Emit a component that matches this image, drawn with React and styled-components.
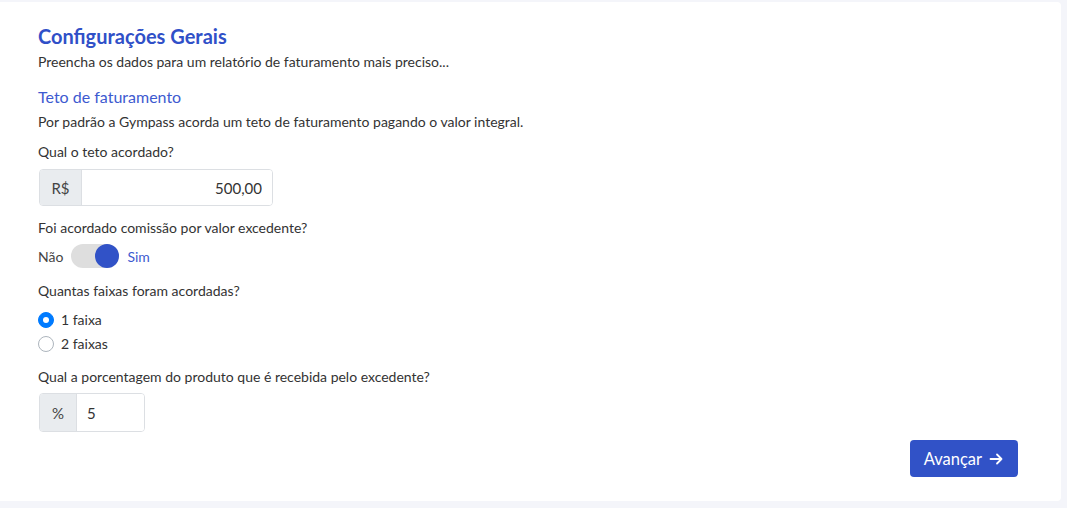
import React, { useState } from 'react';
import styled, { createGlobalStyle } from 'styled-components';

const GlobalStyle = createGlobalStyle`
  html, body {
    margin: 0;
    padding: 0;
    background: #f4f5fa;
  }
  body {
    font-family: "Lato", "Noto Sans", sans-serif;
    color: #333;
  }
  * { box-sizing: border-box; }
`;

const Page = styled.div`
  padding: 2px 6px 7px 0;
  height: 508px;
`;

const Card = styled.div`
  background: #fff;
  border-radius: 0 4px 4px 0;
  height: 499px;
  padding: 21px 43px 24px 38px;
  display: flex;
  flex-direction: column;
  & > * { flex-shrink: 0; }
`;

const Title = styled.h1`
  margin: 0;
  font-size: 20px;
  font-weight: 700;
  color: #3050c8;
  line-height: 26px;
`;

const Subtitle = styled.p`
  margin: 3px 0 0;
  font-size: 14px;
  line-height: 20px;
  color: #333;
`;

const SectionTitle = styled.h2`
  margin: 14px 0 0;
  font-size: 16px;
  font-weight: 400;
  color: #3d5ad0;
  line-height: 22px;
`;

const Text = styled.p`
  margin: ${p => p.$top || 4}px 0 0;
  font-size: 14px;
  line-height: 20px;
  color: #333;
`;

const InputGroup = styled.div`
  display: flex;
  width: ${p => p.$width}px;
  height: ${p => p.$height}px;
  margin-top: ${p => p.$top}px;
  margin-left: 1px;
  border: 1px solid #dcdfe3;
  border-radius: 4px;
  overflow: hidden;
`;

const Prefix = styled.div`
  width: ${p => p.$width}px;
  background: #e9ecef;
  border-right: 1px solid #dcdfe3;
  display: flex;
  align-items: center;
  justify-content: center;
  font-size: 15px;
  color: #444;
`;

const Field = styled.input`
  flex: 1;
  min-width: 0;
  border: none;
  outline: none;
  padding: 0 10px;
  font-family: inherit;
  font-size: 15px;
  color: #333;
  text-align: ${p => p.$align || 'left'};
  background: #fff;
`;

const SwitchRow = styled.div`
  display: flex;
  align-items: center;
  gap: 8px;
  margin-top: 6px;
  font-size: 14px;
`;

const SwitchLabel = styled.span`
  color: ${p => (p.$active ? '#3d5ad0' : '#444')};
`;

const Track = styled.button`
  width: 48px;
  height: 24px;
  border: none;
  border-radius: 12px;
  background: #dedede;
  padding: 0;
  position: relative;
  cursor: pointer;
`;

const Knob = styled.span`
  position: absolute;
  top: 0;
  left: ${p => (p.$on ? 24 : 0)}px;
  width: 24px;
  height: 24px;
  border-radius: 50%;
  background: #3152c7;
`;

const RadioList = styled.div`
  display: flex;
  flex-direction: column;
  gap: 4px;
  margin-top: 9px;
`;

const RadioItem = styled.label`
  display: flex;
  align-items: center;
  gap: 7px;
  font-size: 14px;
  line-height: 20px;
  color: #333;
  cursor: pointer;
`;

const RadioDot = styled.span`
  width: 16px;
  height: 16px;
  border-radius: 50%;
  border: 1px solid ${p => (p.$checked ? '#007bff' : '#adb5bd')};
  background: ${p => (p.$checked ? '#007bff' : '#fff')};
  display: flex;
  align-items: center;
  justify-content: center;
  &::after {
    content: '';
    width: 6px;
    height: 6px;
    border-radius: 50%;
    background: ${p => (p.$checked ? '#fff' : 'transparent')};
  }
`;

const Footer = styled.div`
  display: flex;
  justify-content: flex-end;
  margin-top: 8px;
`;

const Button = styled.button`
  display: flex;
  align-items: center;
  gap: 6px;
  height: 37px;
  padding: 0 14px;
  border: none;
  border-radius: 4px;
  background: #3152c7;
  color: #fff;
  font-family: inherit;
  font-size: 16.5px;
  cursor: pointer;
`;

function Arrow() {
  return (
    <svg width="16" height="16" viewBox="0 0 16 16" fill="none" stroke="#fff" strokeWidth="1.8" strokeLinecap="round" strokeLinejoin="round">
      <path d="M2.5 8h11M9 3.5L13.5 8 9 12.5" />
    </svg>
  );
}

export default function App() {
  const [on, setOn] = useState(true);
  const [faixa, setFaixa] = useState(1);

  return (
    <Page>
      <GlobalStyle />
      <Card>
        <Title>Configurações Gerais</Title>
        <Subtitle>Preencha os dados para um relatório de faturamento mais preciso...</Subtitle>
        <SectionTitle>Teto de faturamento</SectionTitle>
        <Text $top={4}>Por padrão a Gympass acorda um teto de faturamento pagando o valor integral.</Text>
        <Text $top={10}>Qual o teto acordado?</Text>
        <InputGroup $width={234} $height={37} $top={7}>
          <Prefix $width={42}>R$</Prefix>
          <Field $align="right" defaultValue="500,00" />
        </InputGroup>
        <Text $top={12}>Foi acordado comissão por valor excedente?</Text>
        <SwitchRow>
          <SwitchLabel>Não</SwitchLabel>
          <Track onClick={() => setOn(!on)}>
            <Knob $on={on} />
          </Track>
          <SwitchLabel $active>Sim</SwitchLabel>
        </SwitchRow>
        <Text $top={13}>Quantas faixas foram acordadas?</Text>
        <RadioList>
          <RadioItem onClick={() => setFaixa(1)}>
            <RadioDot $checked={faixa === 1} />
            1 faixa
          </RadioItem>
          <RadioItem onClick={() => setFaixa(2)}>
            <RadioDot $checked={faixa === 2} />
            2 faixas
          </RadioItem>
        </RadioList>
        <Text $top={13}>Qual a porcentagem do produto que é recebida pelo excedente?</Text>
        <InputGroup $width={106} $height={39} $top={6}>
          <Prefix $width={37}>%</Prefix>
          <Field defaultValue="5" />
        </InputGroup>
        <Footer>
          <Button>
            Avançar
            <Arrow />
          </Button>
        </Footer>
      </Card>
    </Page>
  );
}
